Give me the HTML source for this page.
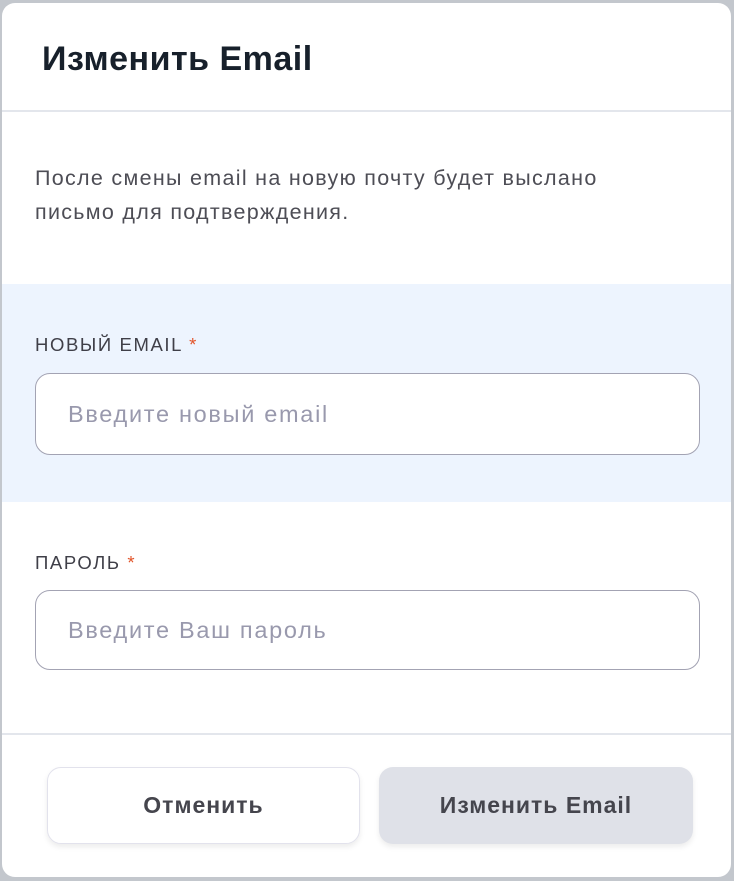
<!DOCTYPE html>
<html><head><meta charset="utf-8"><style>
*{box-sizing:border-box;margin:0;padding:0}
body{width:734px;height:881px;background:#c3c7cd;font-family:"Liberation Sans",sans-serif;position:relative;overflow:hidden}
.m{position:absolute;left:2px;top:3px;width:729px;height:874px;background:#fff;border-radius:13px;overflow:hidden}
.abs{position:absolute}
h1{position:absolute;left:40px;top:37px;font-size:34px;font-weight:600;color:#17202b;letter-spacing:0.5px}
.hr{position:absolute;left:0;width:729px;height:2px;background:#e3e6ec}
.d{left:33px;top:158px;font-size:21.5px;line-height:34px;color:#4d4d55;letter-spacing:1.3px;white-space:nowrap}
.band{left:0;top:281px;width:729px;height:218px;background:#edf4fe}
.lbl{font-size:18.5px;color:#3f3f48;letter-spacing:1.6px}
.lbl b{color:#e2552b;font-weight:400}
.in{left:33px;width:665px;border:1.5px solid #a3a3b3;border-radius:15px;background:#fff;font-size:23.5px;color:#9999ad;padding-left:32px;display:flex;align-items:center;letter-spacing:1.7px}
.btn{top:764px;height:77px;border-radius:14px;font-size:23px;font-weight:600;color:#45454d;display:flex;align-items:center;justify-content:center;letter-spacing:1px}
</style></head><body>
<div class="m">
<h1>Изменить Email</h1>
<div class="hr" style="top:107px"></div>
<div class="abs d">После смены email на новую почту будет выслано<br>письмо для подтверждения.</div>
<div class="abs band"></div>
<div class="abs lbl" style="left:33px;top:331px">НОВЫЙ EMAIL <b>*</b></div>
<div class="abs in" style="top:370px;height:82px">Введите новый email</div>
<div class="abs lbl" style="left:33px;top:549px">ПАРОЛЬ <b>*</b></div>
<div class="abs in" style="top:587px;height:80px">Введите Ваш пароль</div>
<div class="hr" style="top:730px;height:1.5px"></div>
<div class="abs btn" style="left:45px;width:313px;border:1.5px solid #e2e2ec;box-shadow:0 3px 6px rgba(0,0,0,0.08)">Отменить</div>
<div class="abs btn" style="left:377px;width:314px;background:#dfe1e8;box-shadow:0 3px 6px rgba(0,0,0,0.08)">Изменить Email</div>
</div>
</body></html>
